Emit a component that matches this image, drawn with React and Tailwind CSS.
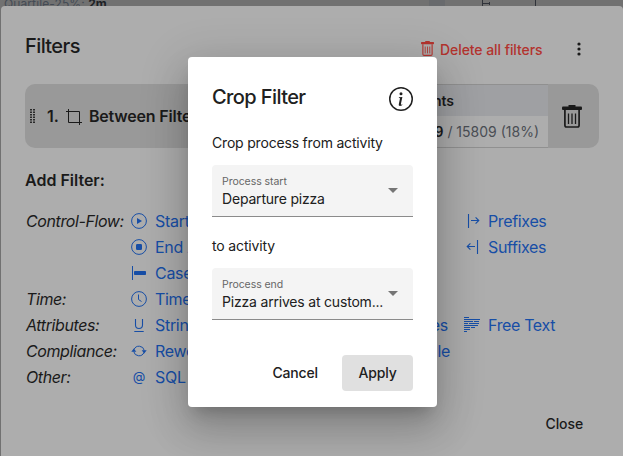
import React from "react";
import { BsInfoCircle } from "react-icons/bs";

const line = { fill: "none", stroke: "currentColor", strokeWidth: 1 };

const icons = {
  play: (
    <>
      <circle cx="8" cy="8" r="7.4" {...line} />
      <path d="M6 5v6l5-3z" fill="currentColor" />
    </>
  ),
  stop: (
    <>
      <circle cx="8" cy="8" r="7.4" {...line} />
      <rect x="5" y="5" width="6" height="6" rx="1.3" fill="currentColor" />
    </>
  ),
  bar: (
    <>
      <path d="M1.5 1v14" {...line} />
      <rect x="3" y="6" width="12" height="4" rx="0.8" fill="currentColor" />
    </>
  ),
  clock: (
    <>
      <circle cx="8" cy="8" r="7.4" {...line} />
      <path d="M7.5 3.5v5l3 2" {...line} />
    </>
  ),
  underline: <path d="M4.5 2v6a3.5 3.5 0 0 0 7 0V2M3.3 14.5h9.4" {...line} strokeWidth="1.1" />,
  sync: (
    <>
      <path d="M3 6.6a5.4 5.4 0 0 1 10.300 .9M13 9.400a5.400 5.400 0 0 1-10.300-.9" {...line} />
      <path d="M.3 8.800h5L2.800 5.600zM10.700 7.200h5l-2.500 3.200z" fill="currentColor" />
    </>
  ),
  prefix: <path d="M2.5 1v14M5 7.5h7.500M9.600 4.300 12.800 7.500l-3.200 3.200" {...line} strokeWidth="1.1" />,
  suffix: <path d="M11.5 1v14M9 7.5H1.5M4.400 4.300 1.200 7.500l3.200 3.200" {...line} strokeWidth="1.1" />,
  text: (
    <path
      d="M0 .5h5M0 2.500h16M0 4.500h9M10 4.500h5M0 6.500h4M5 6.500h10M0 8.500h14M0 10.500h6M7 10.500h4M0 12.500h6M0 14.500h3"
      {...line}
    />
  ),
};

function Icon({ name }) {
  return (
    <svg viewBox="0 0 16 16" className="size-4 shrink-0">
      {icons[name]}
    </svg>
  );
}

function Trash({ className }) {
  return (
    <svg viewBox="0 0 20 23" className={className} fill="none" stroke="currentColor">
      <path d="M6.5 1.200h7" strokeWidth="2.400" />
      <rect x="0" y="1.500" width="20" height="3.400" rx="1" fill="currentColor" stroke="none" />
      <path d="M2.900 5v15.300c0 1 .6 1.700 1.700 1.700h10.800c1.100 0 1.700-.7 1.700-1.700V5" strokeWidth="1.700" />
      <path d="M6.500 8.500v10.500M10 8.500v10.500M13.500 8.500v10.500" strokeWidth="1.300" />
    </svg>
  );
}

function FilterRow({ label, icon, name, middle, middleWidth, last, lastIcon, lastClass }) {
  return (
    <div className="flex h-[26px] items-center whitespace-nowrap text-[16px] text-[#174ea6]">
      <span className="w-[105px] shrink-0 italic text-[#1a1a1a] tracking-[-0.4px]">{label}</span>
      {icon === "at" ? (
        <span className="w-4 shrink-0 text-center text-[13px]">@</span>
      ) : (
        <Icon name={icon} />
      )}
      <span className="ml-2 w-[150px] shrink-0 tracking-[-0.3px]">{name}</span>
      <span className={`flex shrink-0 justify-end tracking-[-0.3px] ${middleWidth || "w-[143px]"}`}>{middle}</span>
      {last && (
        <span className={`flex items-center tracking-[-0.35px] ${lastClass}`}>
          <Icon name={lastIcon} />
          <span>{last}</span>
        </span>
      )}
    </div>
  );
}

function Select({ label, value }) {
  return (
    <div className="flex h-[52px] items-center rounded-t border-b border-[#8b8b8b] bg-[#f4f4f4] pl-[10px] pr-[15px]">
      <div className="w-[161px] shrink-0 whitespace-nowrap pt-[1px]">
        <div className="text-[10.5px] leading-[15px] tracking-[-0.05px] text-[#666]">{label}</div>
        <div className="text-[14px] leading-[20px] tracking-[-0.19px] text-[#202020]">{value}</div>
      </div>
      <svg viewBox="0 0 10 5" className="ml-auto h-[5px] w-[10px] shrink-0">
        <path d="M0 0h10L5 5z" fill="#757575" />
      </svg>
    </div>
  );
}

export default function App() {
  return (
    <div className="relative flex h-[456px] w-[623px] flex-col overflow-hidden bg-[#717171] font-['Inter','Liberation_Sans',sans-serif] text-[#1a1a1a]">
      <div className="flex h-[6px] shrink-0 items-end overflow-hidden">
        <div className="flex h-[6px] w-[429px] items-end pl-1 text-[12px] leading-[12px] text-[#444b55]">
          <span className="mb-[-4px] whitespace-nowrap tracking-[0.1px]">
            Quartile-25%: <b className="text-[#1d2125]">2m</b>
          </span>
        </div>
        <div className="h-[6px] w-4 bg-[#686a6d]" />
        <svg viewBox="0 0 178 6" className="h-[6px] w-[178px]" fill="none" stroke="#30333a">
          <path d="M37.500 0v6M38 3.500h7M44.500 2v3M90.500 0v6" />
        </svg>
      </div>

      <main className="ml-[1px] flex h-[450px] w-[622px] flex-col rounded-t bg-[#adadad] pl-6 pr-6">
        <header className="flex h-[78px] shrink-0 items-center">
          <h1 className="mt-[2px] text-[20px] font-medium leading-[28px] tracking-[-0.6px]">Filters</h1>
          <div className="ml-auto mt-[9px] flex items-center">
            <Trash className="mt-[-3px] h-[15px] w-[13px] text-[#b3332e]" />
            <span className="ml-[6px] w-[103px] whitespace-nowrap text-[14px] font-medium tracking-[-0.07px] text-[#b3332e]">
              Delete all filters
            </span>
            <svg viewBox="0 0 4 14" className="mt-[-2px] ml-[34px] mr-[18px] h-[14px] w-1" fill="#1a1a1a">
              <circle cx="2" cy="2" r="1.600" />
              <circle cx="2" cy="7" r="1.600" />
              <circle cx="2" cy="12" r="1.600" />
            </svg>
          </div>
        </header>

        <section className="flex h-16 w-[574px] shrink-0 items-center overflow-hidden rounded-[10px] bg-[#999]">
          <svg viewBox="0 0 5 14" className="ml-[5px] h-[14px] w-[5px]" fill="#2a2a2a">
            {[0, 2.5, 5, 7.5, 10, 12.5].map((y) => (
              <React.Fragment key={y}>
                <rect x="0" y={y} width="2" height="1.500" />
                <rect x="3" y={y} width="2" height="1.500" />
              </React.Fragment>
            ))}
          </svg>
          <b className="ml-[12px] w-[19px] text-[16px] font-semibold">1.</b>
          <svg viewBox="0 0 16 16" className="mt-[1px] size-4" fill="none" stroke="#1a1a1a">
            <path d="M2.500 0v13.500H16M0 2.500h13.500V16" />
          </svg>
          <b className="ml-[7px] w-[220px] whitespace-nowrap text-[16px] font-semibold tracking-[-0.2px]">Between Filter</b>
          <div className="ml-auto flex h-full w-[155px] flex-col border-y border-[#909090] text-[14px]">
            <div className="flex h-[31px] items-center bg-[#9fa0a3] font-semibold">
              <span className="w-[61px] text-right">Events</span>
            </div>
            <div className="flex h-[31px] items-center justify-end whitespace-pre bg-[#adadad] pr-[9px] text-[#4a4e54]">
              <b className="font-semibold text-[#1a1a1a]">2849</b> / 15809 (18%)
            </div>
          </div>
          <div className="flex w-[51px] items-center pl-[14px]">
            <Trash className="h-[23px] w-[20px] text-[#1a1a1a]" />
          </div>
        </section>

        <h2 className="mt-[20px] text-[16px] font-semibold leading-[24px] tracking-[0px]">Add Filter:</h2>

        <div className="mt-[16px] ml-[1px] flex flex-col">
          <FilterRow label="Control-Flow:" icon="play" name="Start" last="Prefixes" lastIcon="prefix" lastClass="ml-[18px] gap-[6px]" />
          <FilterRow icon="stop" name="End Act." last="Suffixes" lastIcon="suffix" lastClass="ml-[18px] gap-[6px]" />
          <FilterRow icon="bar" name="Case" />
          <FilterRow label="Time:" icon="clock" name="Time" />
          <FilterRow label="Attributes:" icon="underline" name="String" middle="es" last="Free Text" lastIcon="text" lastClass="ml-[16px] gap-[8px]" />
          <FilterRow label="Compliance:" icon="sync" name="Rework" middle="le" middleWidth="w-[145px]" />
          <FilterRow label="Other:" icon="at" name="SQL" />
        </div>

        <div className="mt-[24px] flex justify-end pr-[16px] text-[14px] font-medium leading-[20px] tracking-[-0.1px]">Close</div>
      </main>

      <div className="absolute left-[188px] top-[57px] flex h-[350px] w-[249px] flex-col rounded bg-white px-6 text-[#202020] shadow-[0_11px_15px_-7px_rgba(0,0,0,0.2),0_24px_38px_3px_rgba(0,0,0,0.14),0_9px_46px_8px_rgba(0,0,0,0.12)]">
        <div className="mt-[26px] flex h-8 items-center justify-between">
          <h2 className="mt-[-4px] whitespace-nowrap text-[20px] font-medium tracking-[-0.6px]">Crop Filter</h2>
          <BsInfoCircle className="size-6" />
        </div>
        <p className="mt-[18px] whitespace-nowrap text-[14px] leading-[20px] tracking-[-0.19px]">Crop process from activity</p>
        <div className="mt-[12px]">
          <Select label="Process start" value="Departure pizza" />
        </div>
        <p className="mt-[19px] text-[14px] leading-[20px] tracking-[-0.15px]">to activity</p>
        <div className="mt-[12px]">
          <Select label="Process end" value="Pizza arrives at custom..." />
        </div>
        <div className="mt-[35px] flex items-center justify-end text-[14px] font-medium tracking-[-0.15px]">
          <button className="mr-6 pb-[1px]">Cancel</button>
          <button className="h-9 w-[71px] rounded bg-[#e0e0e0] pb-[1px]">Apply</button>
        </div>
      </div>
    </div>
  );
}
